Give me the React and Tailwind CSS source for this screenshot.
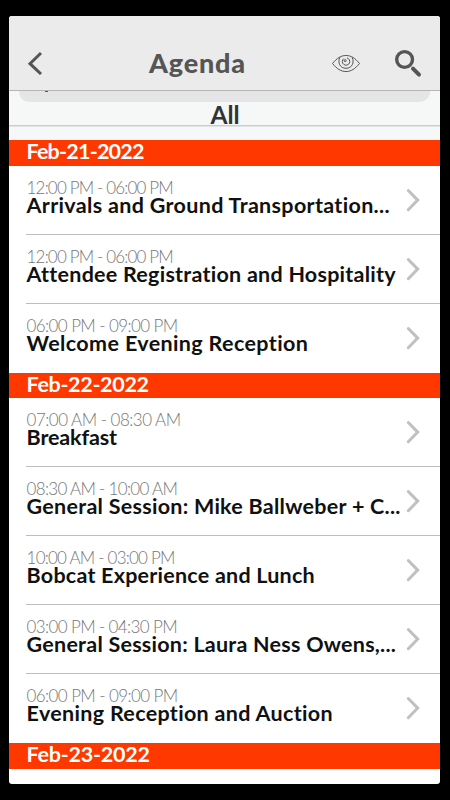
import clsx from "clsx";

const DAYS = [
  {
    date: "Feb-21-2022",
    bar: "h-[26px]",
    tracking: "tracking-[-0.78px]",
    sessions: [
      { time: "12:00 PM - 06:00 PM", title: "Arrivals and Ground Transportation...", timeTracking: "tracking-[-0.84px]", tracking: "tracking-[0.33px]" },
      { time: "12:00 PM - 06:00 PM", title: "Attendee Registration and Hospitality", timeTracking: "tracking-[-0.84px]", tracking: "tracking-[0.25px]" },
      { time: "06:00 PM - 09:00 PM", title: "Welcome Evening Reception", timeTracking: "tracking-[-0.6px]", tracking: "tracking-[0.37px]" },
    ],
  },
  {
    date: "Feb-22-2022",
    bar: "h-[25px]",
    tracking: "tracking-[-0.32px]",
    sessions: [
      { time: "07:00 AM - 08:30 AM", title: "Breakfast", timeTracking: "tracking-[-0.52px]", tracking: "tracking-[-0.15px]" },
      { time: "08:30 AM - 10:00 AM", title: "General Session: Mike Ballweber + C...", timeTracking: "tracking-[-0.7px]", tracking: "tracking-[0.27px]" },
      { time: "10:00 AM - 03:00 PM", title: "Bobcat Experience and Lunch", timeTracking: "tracking-[-0.79px]", tracking: "tracking-[0.23px]" },
      { time: "03:00 PM - 04:30 PM", title: "General Session: Laura Ness Owens,...", timeTracking: "tracking-[-0.63px]", tracking: "tracking-[0.24px]" },
      { time: "06:00 PM - 09:00 PM", title: "Evening Reception and Auction", timeTracking: "tracking-[-0.6px]", tracking: "tracking-[0.32px]" },
    ],
  },
  { date: "Feb-23-2022", bar: "h-[26px]", tracking: "tracking-[-0.22px]", sessions: [] },
];

function Header() {
  return (
    <header className="relative z-10 h-[75px] shrink-0 flex items-start bg-[#ebebeb] border-b border-[#b5b5b5] pt-[33px]">
      <svg className="ml-[18px] mt-[2px] w-4 h-6 shrink-0" viewBox="0 0 16 24" fill="none" stroke="#555" strokeWidth="3">
        <path d="M14 2 L3 12.7 L14 23" />
      </svg>
      <h1 className="ml-[106px] w-[98px] shrink-0 text-[27px] leading-[27px] font-black tracking-[0.8px] text-[#555] whitespace-nowrap">Agenda</h1>
      <svg className="ml-[84px] mt-[5px] w-[30px] h-5 shrink-0" viewBox="0 0 30 20" fill="none" stroke="#555" strokeWidth="1">
        <path d="M1.5 9.5 C6 4 10 1.5 15 1.5 S24 4 28.5 9.5 C24 15 20 17.5 15 17.5 S6 15 1.5 9.5 Z" />
        <path d="M8.9 3.3 C6.3 8.5 9 14.3 15 14.3 S23.7 8.5 21.1 3.3" />
        <path d="M12.6 4.7 A3.7 3.7 0 1 0 16 3.9" />
        <circle cx="14.2" cy="6.6" r="1" />
      </svg>
      <svg className="ml-[32px] w-[30px] h-[30px] shrink-0" viewBox="0 0 30 30" fill="none" stroke="#555">
        <circle cx="11.6" cy="10.5" r="7.9" strokeWidth="3.4" />
        <path d="M20 19.7 L26 25.7" strokeWidth="4" strokeLinecap="round" />
      </svg>
    </header>
  );
}

function FilterBar() {
  return (
    <div className="h-[49px] shrink-0 flex flex-col bg-[#f6f8f7]">
      <div className="mx-[10px] h-[11px] shrink-0 rounded-b-[10px] bg-[#e5e5e7]">
        <div className="ml-[26px] w-[3px] h-px bg-[#555]" />
      </div>
      <div className="h-[24px] shrink-0 pl-px border-b border-[#cbcdcc] text-center text-[24.5px] leading-[26px] font-bold text-[#333]">All</div>
      <div className="h-px shrink-0 bg-[#e3e5e4]" />
    </div>
  );
}

function SessionRow({ session, last }) {
  return (
    <div className="h-[69px] pl-[17px] bg-white">
      <div className={clsx("h-full flex", !last && "border-b border-[#bdbdbd]")}>
        <div className="w-[379px] pl-[0.6px] pt-[13px] whitespace-nowrap">
          <p className={clsx("text-[17px] leading-[18px] font-light text-[#777]", session.timeTracking)}>{session.time}</p>
          <p className={clsx("mt-[-2px] text-[21.5px] leading-[21px] font-bold text-[#111]", session.tracking)}>{session.title}</p>
        </div>
        <svg className="mt-[22px] w-4 h-6 shrink-0" viewBox="0 0 16 24" fill="none" stroke="#c0c0c2" strokeWidth="3" strokeLinecap="round">
          <path d="M3.3 2.5 L12.7 12.1 L3.3 21.7" />
        </svg>
      </div>
    </div>
  );
}

export default function App() {
  return (
    <div className="w-[450px] h-[800px] bg-black pl-[9px] pt-[16px] overflow-hidden font-['Lato',sans-serif]">
      <div className="w-[431px] h-[768px] flex flex-col overflow-hidden rounded-[3px] bg-white">
        <Header />
        <FilterBar />
        {DAYS.map(day => (
          <section key={day.date}>
            <h2 className={clsx("pl-[17.5px] bg-[#ff3800] text-white text-[21.5px] leading-[22px] font-bold", day.bar, day.tracking)}>{day.date}</h2>
            {day.sessions.map((session, i) => (
              <SessionRow key={session.title} session={session} last={i === day.sessions.length - 1} />
            ))}
          </section>
        ))}
      </div>
    </div>
  );
}
